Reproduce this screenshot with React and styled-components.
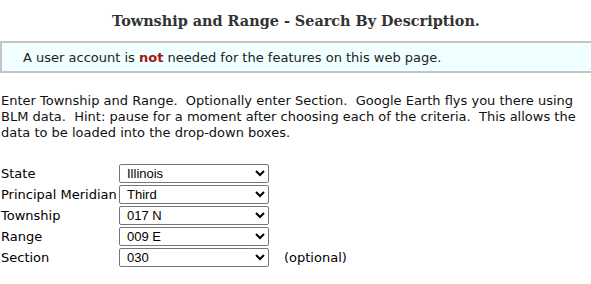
import styled, { createGlobalStyle } from "styled-components";

const GlobalStyle = createGlobalStyle`
  body {
    margin: 0;
    background: #fff;
    font-family: "DejaVu Sans", Verdana, sans-serif;
    font-size: 13px;
    color: #000;
  }
`;

const Page = styled.div`
  padding: 0 0 0 1px;
  overflow: hidden;
`;

const Title = styled.h1`
  margin: 0;
  padding-top: 12px;
  height: 41px;
  box-sizing: border-box;
  text-align: center;
  font-family: "DejaVu Serif", Georgia, serif;
  font-size: 14.4px;
  font-weight: bold;
  color: #333;
`;

const Notice = styled.div`
  margin-left: -1px;
  margin-right: -4px;
  height: 32px;
  box-sizing: border-box;
  border: 2px solid #c4c4c4;
  border-right: none;
  background: #f0ffff;
  padding: 6px 0 0 21px;
  line-height: 17px;
  color: #222;
`;

const Strong = styled.span`
  color: #a01818;
  font-weight: bold;
`;

const Intro = styled.p`
  margin: 20px 0 0 0;
  line-height: 16px;
  color: #111;
`;

const Form = styled.div`
  display: grid;
  grid-template-columns: 118px 150px auto;
  row-gap: 2px;
  margin-top: 23px;
  align-items: center;
`;

const Label = styled.span`
  line-height: 19px;
`;

const Select = styled.select`
  height: 19px;
  margin: 0;
  padding: 0 0 0 3px;
  font-family: "Liberation Sans", Arial, sans-serif;
  font-size: 13px;
  border: 1px solid #767676;
  border-radius: 2px;
  background: #fff;
  color: #000;
`;

const Note = styled.span`
  padding-left: 15px;
  line-height: 19px;
`;

const rows = [
  ["State", "Illinois"],
  ["Principal Meridian", "Third"],
  ["Township", "017 N"],
  ["Range", "009 E"],
  ["Section", "030", "(optional)"],
];

export default function App() {
  return (
    <Page>
      <GlobalStyle />
      <Title>Township and Range - Search By Description.</Title>
      <Notice>
        A user account is <Strong>not</Strong> needed for the features on this
        web page.
      </Notice>
      <Intro>
        Enter Township and Range.&nbsp; Optionally enter Section.&nbsp; Google
        Earth flys you there using BLM data.&nbsp; Hint: pause for a moment
        after choosing each of the criteria.&nbsp; This allows the data to be
        loaded into the drop-down boxes.
      </Intro>
      <Form>
        {rows.map(([label, value, note]) => (
          <>
            <Label key={label + "l"}>{label}</Label>
            <Select key={label + "s"} defaultValue={value}>
              <option>{value}</option>
            </Select>
            <Note key={label + "n"}>{note || ""}</Note>
          </>
        ))}
      </Form>
    </Page>
  );
}
